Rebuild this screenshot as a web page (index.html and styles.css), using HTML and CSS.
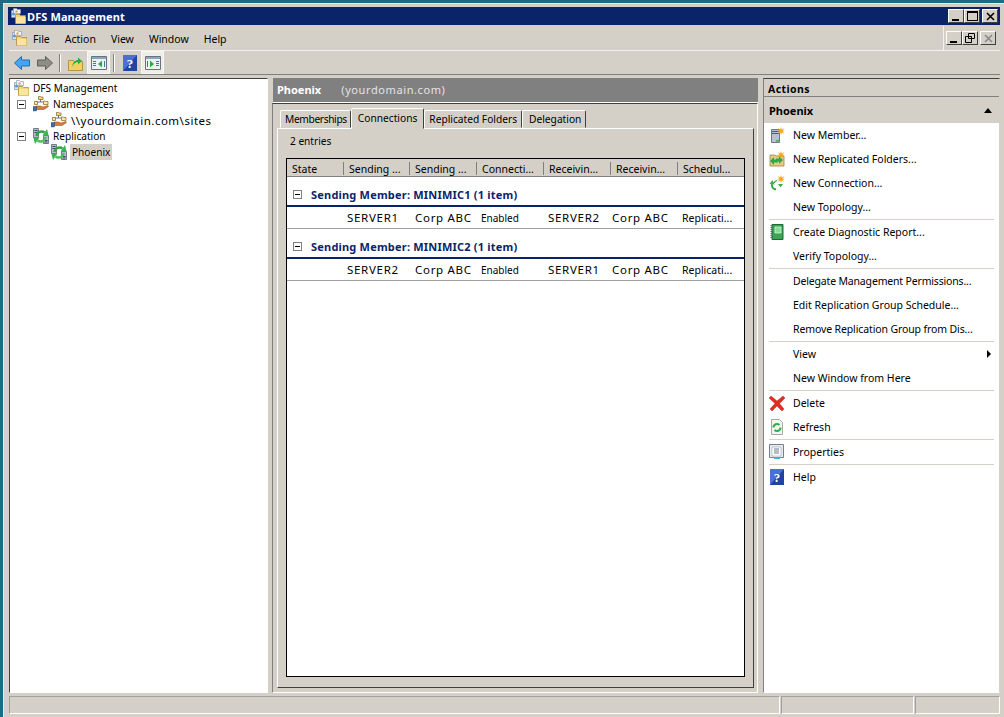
FILE: index.html
```html
<!DOCTYPE html>
<html lang="en">
<head>
    <meta charset="UTF-8">
    <title>DFS Management</title>
    <link rel="stylesheet" href="styles.css">
</head>
<body>
    <svg class="defs" width="0" height="0">
        <defs>
            <symbol id="dfs" viewBox="0 0 16 16">
                <path d="M1.500 2.500h3l1 1h4v6h-8z" fill="#dbe8f6" stroke="#7f93ad" stroke-width=".7"/>
                <path d="M3.500 .5h3l1 1h3v4h-7z" fill="#f3f6fa" stroke="#8d9db3" stroke-width=".7"/>
                <circle cx="3.500" cy="6" r="1.600" fill="#5b9be6"/>
                <circle cx="6.500" cy="3.500" r="1.200" fill="#e8a060"/>
                <path d="M5.500 6.500h4l1 1h5v8h-10z" fill="#f7d572" stroke="#b58d35" stroke-width=".8"/>
                <path d="M6 9h9.500v6.500H6z" fill="#fde5a0"/>
            </symbol>
            <symbol id="namespace" viewBox="0 0 16 16">
                <path d="M7.500 3v3M3 8V6h10v2" fill="none" stroke="#4b5a70" stroke-width=".8"/>
                <path d="M5.500 .5h2l.5.500h2v2.500H5.500z" fill="#f5d67c" stroke="#7c6428" stroke-width=".7"/>
                <path d="M1.500 5.500h3v3h-3zM10.500 5h2l.5.500h2v3h-4.500z" fill="#f9e6a8" stroke="#7c6428" stroke-width=".7"/>
                <path d="M3 10h4l3 1 5-1.500.5 1L11 13.500H3z" fill="#dd7a34" stroke="#8a4517" stroke-width=".5"/>
                <path d="M0 10.500h3.500V15H0z" fill="#3c6ea8" stroke="#27486e" stroke-width=".4"/>
            </symbol>
            <symbol id="replication" viewBox="0 0 16 16">
                <path d="M.5 .5h5v9h-5z" fill="#b4bdca" stroke="#56647a" stroke-width=".8"/>
                <path d="M1.500 2.500h3M1.500 4.500h3" stroke="#3c4a60"/>
                <path d="M10.500 7.500h5v8h-5z" fill="#b4bdca" stroke="#56647a" stroke-width=".8"/>
                <path d="M11.500 12.500h3M11.500 14h3" stroke="#3c4a60"/>
                <path d="M3.500 8a5 5 0 0 1 8-3.500" fill="none" stroke="#2fa43f" stroke-width="2.400"/>
                <path d="M9.500 7.500l6-.5L14 1z" fill="#38b648"/>
                <path d="M12.500 9a5 5 0 0 1-8 3.500" fill="none" stroke="#4cc257" stroke-width="2.400"/>
                <path d="M6.500 9.500l-6 .5L2 16z" fill="#38b648"/>
            </symbol>
            <symbol id="help" viewBox="0 0 14 16">
                <path d="M0 0h14v16H0z" fill="#2343a0"/>
                <path d="M0 0h14L0 16z" fill="#4a70d8"/>
                <text class="help-mark" x="7" y="13" text-anchor="middle">?</text>
            </symbol>
            <symbol id="burst" viewBox="0 0 8 8">
                <path d="M4 0l.8 2.600L7.500 1 5.600 3.500 8 4l-2.400.8L7.300 7 4.800 5.600 4 8l-.8-2.400L1 7l1.400-2.200L0 4l2.400-.5L.8 1l2.400 1.600z" fill="#f6a81e"/>
            </symbol>
        </defs>
    </svg>

    <div class="window">
        <div class="titlebar">
            <svg class="ico-16"><use href="#dfs"/></svg>
            <span class="title-text">DFS Management</span>
            <div class="win-btns">
                <span class="win-btn"><i class="glyph-min"></i></span>
                <span class="win-btn"><i class="glyph-max"></i></span>
                <span class="win-btn"><svg width="9" height="9" viewBox="0 0 9 9"><path d="M1 1l7 7M8 1L1 8" stroke="#000" stroke-width="1.600"/></svg></span>
            </div>
        </div>

        <div class="menubar">
            <svg class="ico-16"><use href="#dfs"/></svg>
            <nav class="menu-items">
                <span>File</span>
                <span>Action</span>
                <span>View</span>
                <span>Window</span>
                <span>Help</span>
            </nav>
            <div class="child-btns">
                <span class="win-btn"><i class="glyph-min"></i></span>
                <span class="win-btn"><svg width="10" height="10" viewBox="0 0 10 10"><path d="M3.500 .5h6v5h-6zM.5 3.500h6v6h-6z" fill="#d4d0c8" stroke="#000"/></svg></span>
                <span class="win-btn"><svg width="9" height="9" viewBox="0 0 9 9"><path d="M1 1l7 7M8 1L1 8" stroke="#8a8a8a" stroke-width="1.600"/></svg></span>
            </div>
        </div>

        <div class="toolbar">
            <span class="tool">
                <svg width="16" height="14" viewBox="0 0 16 14"><path d="M7.500 .5L.5 7l7 6.500V10h8V4h-8z" fill="#4aa3ee" stroke="#1c6cb8"/></svg>
            </span>
            <span class="tool">
                <svg width="16" height="14" viewBox="0 0 16 14"><path d="M8.500 .5l7 6.500-7 6.500V10H.5V4h8z" fill="#8e8e88" stroke="#5f5f5a"/></svg>
            </span>
            <span class="tool-sep"></span>
            <span class="tool">
                <svg width="15" height="16" viewBox="0 0 15 16"><path d="M.5 5.500h5l1 1h8v9H.5z" fill="#f3d064" stroke="#a8842c" stroke-width=".8"/><path d="M4 12c1-5 3-7 6-7V2.500L14 6l-4 3.500V7c-2 0-4 1-6 5z" fill="#2fa84a"/></svg>
            </span>
            <span class="tool tool-on">
                <svg width="16" height="14" viewBox="0 0 16 14"><path d="M.5 .5h15v13H.5z" fill="#eef1f4" stroke="#69727e"/><path d="M1 1h14v2H1z" fill="#8fa3bb"/><path d="M2 5h3v1H2zM2 7h3v1H2zM2 9h3v1H2zM13 5h1v6h-1z" fill="#3a76b8"/><path d="M7 8l4-3.500v7z" fill="#2fa84a"/></svg>
            </span>
            <span class="tool-sep"></span>
            <span class="tool"><svg width="14" height="16"><use href="#help"/></svg></span>
            <span class="tool tool-on">
                <svg width="16" height="14" viewBox="0 0 16 14"><path d="M.5 .5h15v13H.5z" fill="#eef1f4" stroke="#69727e"/><path d="M1 1h14v2H1z" fill="#8fa3bb"/><path d="M11 5h3v1h-3zM11 7h3v1h-3zM11 9h3v1h-3zM2 5h1v6H2z" fill="#3a76b8"/><path d="M9 8L5 4.500v7z" fill="#2fa84a"/></svg>
            </span>
        </div>

        <div class="panes">
            <aside class="tree">
                <div class="tree-row">
                    <svg class="ico-16"><use href="#dfs"/></svg>
                    <span>DFS Management</span>
                </div>
                <div class="tree-row level-1">
                    <span class="expander"></span>
                    <svg class="ico-16"><use href="#namespace"/></svg>
                    <span>Namespaces</span>
                </div>
                <div class="tree-row level-2">
                    <svg class="ico-16"><use href="#namespace"/></svg>
                    <span class="wide">\\yourdomain.com\sites</span>
                </div>
                <div class="tree-row level-1">
                    <span class="expander"></span>
                    <svg class="ico-16"><use href="#replication"/></svg>
                    <span>Replication</span>
                </div>
                <div class="tree-row level-2">
                    <svg class="ico-16"><use href="#replication"/></svg>
                    <span class="selected">Phoenix</span>
                </div>
            </aside>

            <main class="center">
                <div class="center-head">
                    <b>Phoenix</b>
                    <span>(yourdomain.com)</span>
                </div>
                <div class="center-body">
                    <div class="tabs">
                        <span class="tab tab-members">Memberships</span>
                        <span class="tab active">Connections</span>
                        <span class="tab">Replicated Folders</span>
                        <span class="tab tab-delegation">Delegation</span>
                    </div>
                    <div class="tab-page">
                        <div class="entries">2 entries</div>
                        <div class="list">
                            <div class="list-head">
                                <span>State</span>
                                <span>Sending ...</span>
                                <span>Sending ...</span>
                                <span>Connecti...</span>
                                <span>Receivin...</span>
                                <span>Receivin...</span>
                                <span>Schedul...</span>
                            </div>
                            <div class="group">
                                <span class="expander"></span>
                                <b>Sending Member: MINIMIC1 (1 item)</b>
                            </div>
                            <div class="list-row">
                                <span></span>
                                <span class="wide">SERVER1</span>
                                <span class="wide">Corp ABC</span>
                                <span>Enabled</span>
                                <span class="wide">SERVER2</span>
                                <span class="wide">Corp ABC</span>
                                <span>Replicati...</span>
                            </div>
                            <div class="group">
                                <span class="expander"></span>
                                <b>Sending Member: MINIMIC2 (1 item)</b>
                            </div>
                            <div class="list-row">
                                <span></span>
                                <span class="wide">SERVER2</span>
                                <span class="wide">Corp ABC</span>
                                <span>Enabled</span>
                                <span class="wide">SERVER1</span>
                                <span class="wide">Corp ABC</span>
                                <span>Replicati...</span>
                            </div>
                        </div>
                    </div>
                </div>
            </main>

            <aside class="actions">
                <div class="actions-head">Actions</div>
                <div class="actions-sub">
                    <b>Phoenix</b>
                    <svg width="8" height="5" viewBox="0 0 8 5"><path d="M4 0l4 5H0z"/></svg>
                </div>
                <div class="action-list">
                    <div class="action">
                        <svg class="ico-16" viewBox="0 0 16 16"><path d="M2.500 2.500h8v13h-8z" fill="#b9c2cc" stroke="#6a7888"/><path d="M3 4h7v1H3zM3 6h7v1H3z" fill="#4d5c6e"/><path d="M7 13h3v1.500H7z" fill="#3fb24a"/><use href="#burst" x="8" y="0" width="8" height="8"/></svg>
                        <span>New Member...</span>
                    </div>
                    <div class="action">
                        <svg class="ico-16" viewBox="0 0 16 16"><path d="M1 4h5l1 1h8v10H1z" fill="#e5cd83" stroke="#9a8440" stroke-width=".8"/><path d="M1 10l4-4v2.500h4v3H5V14zM14 9l-4 4v-2.500H7v-3h3V5z" fill="#2fa84a"/><use href="#burst" x="8" y="0" width="8" height="8"/></svg>
                        <span>New Replicated Folders...</span>
                    </div>
                    <div class="action">
                        <svg class="ico-16" viewBox="0 0 16 16"><path d="M7 14.500C3.500 14 2.500 11.500 3 9" fill="none" stroke="#2fa43f" stroke-width="1.800"/><path d="M5.500 9.500L3.500 5 .5 9z" fill="#3bb04a"/><path d="M8 5.500C6.500 6 5.500 7 5 8" fill="none" stroke="#2fa43f" stroke-width="1.300"/><path d="M9 9h5l-2.500 3.500z" fill="#3bb04a"/><use href="#burst" x="8" y="0" width="8" height="8"/></svg>
                        <span>New Connection...</span>
                    </div>
                    <div class="action"><i class="ico-16"></i><span>New Topology...</span></div>
                    <hr>
                    <div class="action">
                        <svg class="ico-16" viewBox="0 0 16 16"><path d="M3 .5h11v15H3z" fill="#3aa655" stroke="#1d6a30"/><path d="M6 3h6v6H6z" fill="#7fdc90" stroke="#e8f7ea" stroke-width=".7"/><path d="M2.500 1v14" stroke="#666" stroke-dasharray="1 1" stroke-width="2"/></svg>
                        <span>Create Diagnostic Report...</span>
                    </div>
                    <div class="action"><i class="ico-16"></i><span>Verify Topology...</span></div>
                    <hr>
                    <div class="action tight"><i class="ico-16"></i><span>Delegate Management Permissions...</span></div>
                    <div class="action"><i class="ico-16"></i><span>Edit Replication Group Schedule...</span></div>
                    <div class="action tight-2"><i class="ico-16"></i><span>Remove Replication Group from Dis...</span></div>
                    <hr>
                    <div class="action">
                        <i class="ico-16"></i><span>View</span>
                        <svg class="arrow" width="4" height="8" viewBox="0 0 4 8"><path d="M0 0l4 4-4 4z"/></svg>
                    </div>
                    <div class="action"><i class="ico-16"></i><span>New Window from Here</span></div>
                    <hr>
                    <div class="action">
                        <svg class="ico-16" viewBox="0 0 16 16"><path d="M2 1l6 5 6-5 2 2-5.500 5.500L15 14l-2 2-5-5-5 5-2-2 5-5.500L0 3z" fill="#e02c22" stroke="#a81812" stroke-width=".4"/></svg>
                        <span>Delete</span>
                    </div>
                    <div class="action">
                        <svg class="ico-16" viewBox="0 0 16 16"><path d="M2.500 .5h8l3 3v12h-11z" fill="#f4f4f2" stroke="#a8a8a8"/><path d="M4.500 8.500a3.500 3.500 0 0 1 6-2.500M11.500 8.500a3.500 3.500 0 0 1-6 2.500" fill="none" stroke="#2fb04a" stroke-width="2"/></svg>
                        <span>Refresh</span>
                    </div>
                    <hr>
                    <div class="action">
                        <svg class="ico-16" viewBox="0 0 16 16"><path d="M.5 .5h14v13H.5z" fill="#e8ebef" stroke="#76808c"/><path d="M3 3h9v9H3z" fill="#fff" stroke="#9aa6b4" stroke-width=".6"/><path d="M5 5h5M5 7h5M5 9h5" stroke="#6a7a8c"/><path d="M5 13h6v2H5z" fill="#39b8d8"/></svg>
                        <span>Properties</span>
                    </div>
                    <hr>
                    <div class="action">
                        <svg class="ico-16"><use href="#help"/></svg>
                        <span>Help</span>
                    </div>
                </div>
            </aside>
        </div>

        <div class="statusbar">
            <div class="status-main"></div>
            <div class="status-mid"></div>
            <div class="status-end"></div>
        </div>
    </div>
</body>
</html>
```

FILE: styles.css
```css
* {
    box-sizing: border-box;
}

html, body {
    height: 100%;
}

body {
    margin: 0;
    padding: 3px 0 0 3px;
    background: #1b6b85;
    color: #000;
    font-family: 'Noto Sans', 'DejaVu Sans', sans-serif;
    font-size: 10.5px;
    overflow: hidden;
}

.defs {
    position: absolute;
}

.ico-16 {
    display: block;
    width: 16px;
    height: 16px;
    flex: none;
}

.window {
    height: 100%;
    padding: 3px 4px 0 5px;
    background: #d4d0c8;
    border-top: 1px solid #ece9e2;
    border-left: 1px solid #ece9e2;
    display: flex;
    flex-direction: column;
}

.titlebar {
    height: 18px;
    margin: 0 0 1px -1px;
    padding-left: 2px;
    background: #0a246a;
    color: #fff;
    display: flex;
    align-items: center;
    gap: 1px;
    flex: none;
}

.title-text {
    font-weight: 700;
    font-size: 11px;
    letter-spacing: .1px;
}

.win-btns {
    margin-left: auto;
    margin-right: 2px;
    display: flex;
}

.win-btn {
    width: 16px;
    height: 14px;
    background: #d4d0c8;
    border: 1px solid;
    border-color: #fff #404040 #404040 #fff;
    display: flex;
    align-items: center;
    justify-content: center;
    position: relative;
}

.win-btn:last-child {
    margin-left: 2px;
}

.glyph-min {
    position: absolute;
    left: 3px;
    bottom: 1px;
    width: 7px;
    height: 2px;
    background: #000;
}

.glyph-max {
    width: 11px;
    height: 10px;
    border: 1px solid #000;
    border-top-width: 2px;
}

.menubar {
    height: 25px;
    border-bottom: 1px solid #f4f2ec;
    display: flex;
    align-items: center;
    padding-left: 2px;
    flex: none;
}

.menu-items {
    display: flex;
    gap: 15px;
    margin-left: 6px;
    padding-top: 2px;
}

.child-btns {
    margin-left: auto;
    align-self: stretch;
    width: 57px;
    padding-left: 2px;
    border-left: 1px solid #f4f2ec;
    display: flex;
    align-items: center;
}

.toolbar {
    height: 24px;
    display: flex;
    align-items: center;
    padding-left: 1px;
    border-bottom: 1px solid #808080;
    flex: none;
}

.tool {
    width: 23px;
    height: 23px;
    display: flex;
    align-items: center;
    justify-content: center;
}

.tool-on {
    background: #efede8;
    border: 1px solid #f8f7f3;
}

.tool-sep {
    width: 2px;
    height: 18px;
    margin: 0 3px;
    background: #808080;
    border-right: 1px solid #fff;
}

.panes {
    flex: 1;
    min-height: 0;
    margin-top: 3px;
    display: flex;
    gap: 4px;
}

.tree {
    width: 259px;
    background: #fff;
    border: 1px solid;
    border-color: #404040 #fff #fff #404040;
    padding-top: 1px;
    font-size: 10.1px;
    flex: none;
}

.tree-row {
    height: 16px;
    display: flex;
    align-items: center;
    gap: 4px;
    padding-left: 3px;
}

.level-1 {
    padding-left: 7px;
}

.level-1 .expander {
    margin-right: 3px;
}

.level-2 {
    padding-left: 41px;
}

.wide {
    font-size: 11.5px;
    letter-spacing: .5px;
}

.selected {
    height: 16px;
    line-height: 16px;
    width: 42px;
    margin-left: -1px;
    padding-left: 2px;
    background: #d4d0c8;
}

.expander {
    width: 9px;
    height: 9px;
    border: 1px solid #808080;
    background: linear-gradient(#000, #000) center / 5px 1px no-repeat #fff;
    flex: none;
}

.center {
    flex: 1;
    min-width: 0;
    margin-right: 1px;
    display: flex;
    flex-direction: column;
}

.center-head {
    height: 25px;
    padding: 0 0 2px 4px;
    margin-left: 1px;
    background: #808080;
    color: #fff;
    display: flex;
    align-items: center;
    gap: 20px;
    font-size: 11px;
    border-bottom: 1px solid #fff;
    flex: none;
}

.center-head span {
    color: #e4e4e4;
    letter-spacing: .6px;
}

.center-body {
    flex: 1;
    min-height: 0;
    padding: 4px 3px 4px 4px;
    border: 1px solid;
    border-color: #404040 #fff #fff #808080;
    display: flex;
    flex-direction: column;
}

.tabs {
    display: flex;
    height: 20px;
    padding-left: 3px;
    align-items: flex-end;
    font-size: 10.2px;
    flex: none;
}

.tab {
    height: 18px;
    padding: 0 4px;
    border: 1px solid;
    border-color: #fff #404040 transparent #fff;
    border-radius: 2px 2px 0 0;
    display: flex;
    align-items: center;
}

.tab-members {
    padding: 0 3px 0 4px;
    letter-spacing: -.35px;
}

.tab-delegation {
    padding: 0 4px 0 6px;
}

.tab.active {
    height: 21px;
    margin-bottom: -1px;
    padding: 0 6px 2px 6px;
    background: #d4d0c8;
    position: relative;
    z-index: 1;
}

.tab-page {
    flex: 1;
    min-height: 0;
    padding: 0 8px 10px 8px;
    border: 1px solid;
    border-color: #fff #404040 #404040 #fff;
    display: flex;
    flex-direction: column;
}

.entries {
    height: 29px;
    padding: 5px 0 0 4px;
    font-size: 10.1px;
    flex: none;
}

.list {
    flex: 1;
    min-height: 0;
    background: #fff;
    border: 1px solid #000;
}

.list-head,
.list-row {
    display: grid;
    grid-template-columns: 57px 66px 67px 67px 67px 67px 66px;
}

.list-head {
    height: 18px;
    padding-top: 2px;
    background: #d4d0c8;
    border-bottom: 1px solid #808080;
    align-items: center;
}

.list-head span {
    padding-left: 5px;
    border-right: 1px solid #808080;
    height: 13px;
    line-height: 15px;
    white-space: nowrap;
}

.list-head span:last-child {
    border-right: none;
}

.group {
    height: 30px;
    padding: 7px 0 0 6px;
    display: flex;
    align-items: center;
    gap: 9px;
    border-bottom: 2px solid #0a246a;
    color: #0a246a;
    font-size: 11px;
    letter-spacing: .2px;
}

.list-row {
    height: 22px;
    align-items: center;
    border-bottom: 1px solid #a0a0a0;
}

.list-row span {
    white-space: nowrap;
}

.list-row .wide {
    letter-spacing: .7px;
}

.list-row span:nth-child(2) {
    padding-left: 3px;
}

.list-row span:nth-child(3) {
    padding-left: 5px;
}

.list-row span:nth-child(4),
.list-row span:nth-child(5),
.list-row span:nth-child(7) {
    padding-left: 4px;
}

.list-row span:nth-child(4) {
    font-size: 10px;
}

.list-row span:nth-child(6) {
    padding-left: 1px;
}

.actions {
    width: 237px;
    flex: none;
    display: flex;
    flex-direction: column;
    background: #fff;
    border: 1px solid;
    border-color: #404040 #d4d0c8 #fff #808080;
}

.actions-head {
    height: 18px;
    padding: 3px 0 0 4px;
    background: #d4d0c8;
    font-weight: 700;
    letter-spacing: .4px;
    border-bottom: 1px solid #808080;
    flex: none;
}

.actions-sub {
    height: 26px;
    padding: 0 7px 0 5px;
    background: #d4d0c8;
    display: flex;
    align-items: center;
    justify-content: space-between;
    font-size: 11px;
    flex: none;
}

.action-list {
    padding: 0 5px;
}

.action {
    height: 24px;
    display: flex;
    align-items: center;
    gap: 8px;
}

.tight {
    letter-spacing: -.17px;
}

.tight-2 {
    letter-spacing: -.12px;
}

.action-list hr {
    margin: 0;
    border: none;
    height: 1px;
    background: #d4d0c8;
}

.arrow {
    margin-left: auto;
    margin-right: 3px;
}

.statusbar {
    height: 21px;
    margin-top: 3px;
    display: flex;
    gap: 1px;
    flex: none;
}

.statusbar div {
    height: 18px;
    border: 1px solid;
    border-color: #a0a0a0 #fff #fff #a0a0a0;
}

.status-main {
    flex: 1;
}

.status-mid {
    width: 133px;
}

.status-end {
    width: 85px;
}

.help-mark {
    fill: #fff;
    font: 700 13px 'Liberation Serif', serif;
}
```
